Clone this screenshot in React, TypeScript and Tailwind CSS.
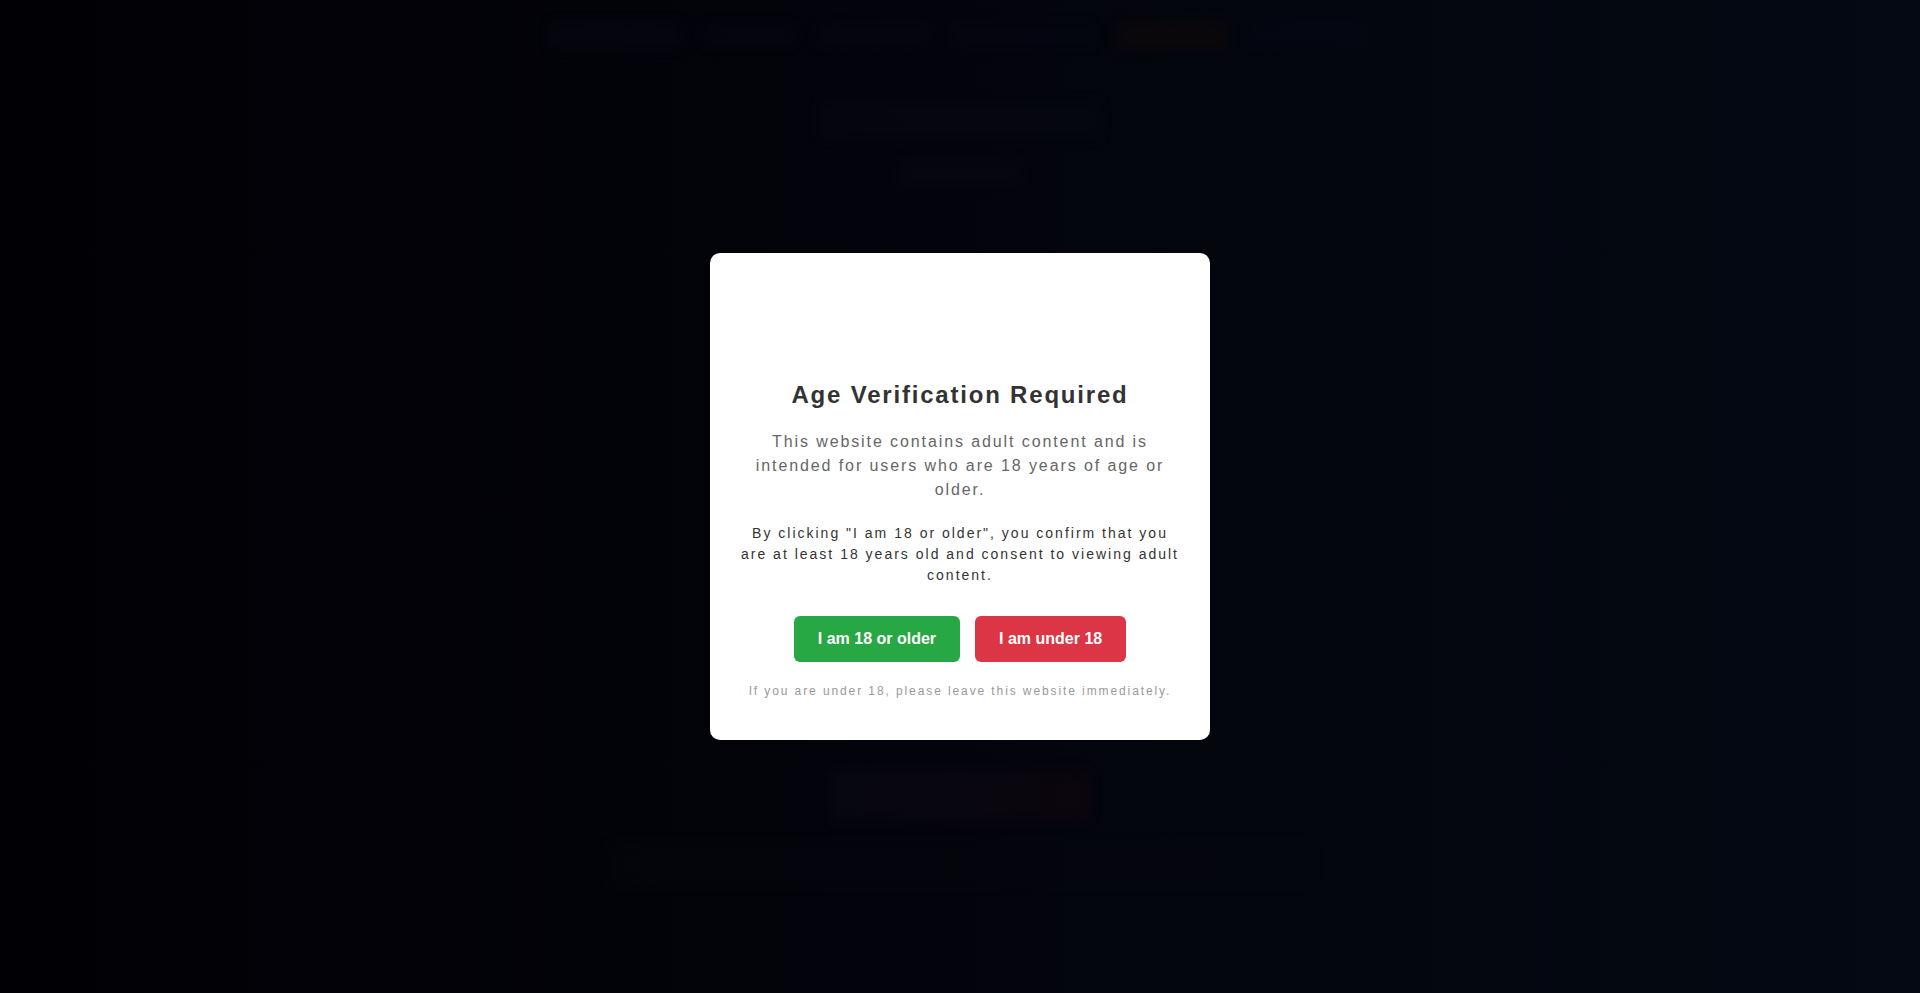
import { useState } from 'react';

export default function App() {
  const [confirmed, setConfirmed] = useState(false);

  return (
    <div
      className="relative h-[993px] w-full overflow-hidden bg-gradient-to-r from-[#020206] via-[#04050d] to-[#060b17]"
      style={{ fontFamily: '"Liberation Sans", Arial, sans-serif' }}
    >
      {/* Blurred page behind the overlay */}
      <div className="pointer-events-none flex h-full flex-col opacity-40 blur-[6px]">
        <header className="flex h-[70px] items-center justify-center gap-6 px-10">
          <div className="h-[26px] w-[130px] rounded bg-[#0b0b18]" />
          <div className="h-[20px] w-[90px] rounded bg-[#08081a]" />
          <div className="h-[20px] w-[110px] rounded bg-[#09091a]" />
          <div className="h-[20px] w-[140px] rounded bg-[#08091b]" />
          <div className="h-[30px] w-[110px] rounded bg-[#1a0c0c]" />
          <div className="h-[20px] w-[120px] rounded bg-[#08091b]" />
        </header>
        <div className="flex flex-1 justify-center gap-8 px-[530px] pt-8">
          <div className="flex flex-1 flex-col items-center gap-6">
            <div className="h-[36px] w-[280px] rounded bg-[#0a0c16]" />
            <div className="h-[24px] w-[120px] rounded bg-[#0a0b1c]" />
            <div className="mt-[560px] h-[50px] w-[260px] rounded-lg bg-gradient-to-r from-[#0e0e22] to-[#1c080e]" />
            <div className="h-[40px] w-[700px] rounded bg-[#07080f]" />
          </div>
        </div>
      </div>

      {/* Age gate overlay */}
      <div className="absolute inset-0 flex items-center justify-center bg-black/10">
        <div className="w-[500px] rounded-[10px] bg-white px-[30px] pb-10 pt-10 text-center">
          <div className="mb-5 h-[68px]" />
          <h2 className="mb-5 text-[24px] font-bold leading-[1.2] tracking-[1.8px] text-[#333]">
            Age Verification Required
          </h2>
          <p className="mb-[21px] text-[16px] leading-[24px] tracking-[1.9px] text-[#666]">
            This website contains adult content and is intended for users who are 18 years of age or older.
          </p>
          <p className="text-[14px] leading-[21px] tracking-[2px] text-[#333]">
            By clicking "I am 18 or older", you confirm that you are at least 18 years old and consent to viewing adult content.
          </p>
          <div className="mt-[30px] flex justify-center gap-[15px]">
            <button
              onClick={() => setConfirmed(true)}
              className="h-[46px] rounded-md bg-[#28a745] px-6 text-[16px] font-bold text-white"
            >
              I am 18 or older
            </button>
            <button className="h-[46px] rounded-md bg-[#dc3545] px-6 text-[16px] font-bold text-white">
              I am under 18
            </button>
          </div>
          <p className="mt-5 text-[12px] leading-[18px] tracking-[1.9px] text-[#999]">
            {confirmed ? 'Thank you.' : 'If you are under 18, please leave this website immediately.'}
          </p>
        </div>
      </div>
    </div>
  );
}
